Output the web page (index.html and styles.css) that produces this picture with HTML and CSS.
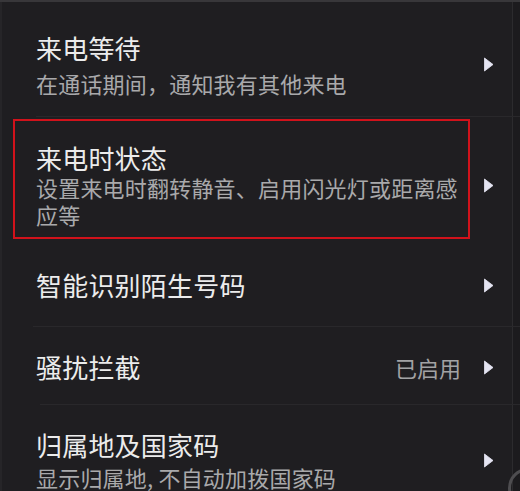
FILE: index.html
```html
<!DOCTYPE html>
<html lang="zh-CN">
<head>
<meta charset="utf-8">
<title>来电设置</title>
<link rel="stylesheet" href="styles.css">
</head>
<body>
<div class="screen">
  <div class="row row-1">
    <div class="text">
      <div class="title">来电等待</div>
      <div class="sub">在通话期间，通知我有其他来电</div>
    </div>
    <svg class="arrow" viewBox="0 0 11 15"><polygon points="1.5,1 10,7.5 1.5,14" stroke-linejoin="round" /></svg>
  </div>
  <div class="sep sep-1"></div>
  <div class="row row-2">
    <div class="text highlight">
      <div class="title">来电时状态</div>
      <div class="sub">设置来电时翻转静音、启用闪光灯或距离感应等</div>
    </div>
    <svg class="arrow" viewBox="0 0 11 15"><polygon points="1.5,1 10,7.5 1.5,14" stroke-linejoin="round" /></svg>
  </div>
  <div class="row row-3">
    <div class="text">
      <div class="title">智能识别陌生号码</div>
    </div>
    <svg class="arrow" viewBox="0 0 11 15"><polygon points="1.5,1 10,7.5 1.5,14" stroke-linejoin="round" /></svg>
  </div>
  <div class="sep sep-3"></div>
  <div class="row row-4">
    <div class="text">
      <div class="title">骚扰拦截</div>
    </div>
    <span class="value">已启用</span>
    <svg class="arrow" viewBox="0 0 11 15"><polygon points="1.5,1 10,7.5 1.5,14" stroke-linejoin="round" /></svg>
  </div>
  <div class="sep sep-4"></div>
  <div class="row row-5">
    <div class="text">
      <div class="title">归属地及国家码</div>
      <div class="sub">显示归属地, 不自动加拨国家码</div>
    </div>
    <svg class="arrow" viewBox="0 0 11 15"><polygon points="1.5,1 10,7.5 1.5,14" stroke-linejoin="round" /></svg>
  </div>
  <div class="fab-ring"></div>
</div>
</body>
</html>
```

FILE: styles.css
```css
html, body {
  margin: 0;
  padding: 0;
  background: #1f1e21;
}

.screen {
  position: relative;
  width: 520px;
  height: 491px;
  overflow: hidden;
  background: #1f1e21;
  border-top: 2px solid #38373a;
  box-sizing: border-box;
  font-family: "Noto Sans CJK SC", "Noto Sans", sans-serif;
  box-shadow: inset 2px 0 0 #262528, inset -7px 0 0 #1c1b1e, inset -8px 0 0 #2c2b2e;
}

.row {
  display: flex;
  align-items: center;
  padding-left: 36px;
  padding-right: 26px;
}

.text {
  flex: 1;
  min-width: 0;
  max-width: 430px;
}

.title {
  font-size: 26px;
  line-height: 32px;
  color: #ececec;
  letter-spacing: 0.2px;
}

.sub {
  font-size: 22px;
  line-height: 27px;
  color: #a9a9ab;
  letter-spacing: 0.2px;
}

.value {
  font-size: 22px;
  line-height: 32px;
  color: #a2a2a4;
  margin-right: 22px;
}

.arrow {
  width: 11px;
  height: 15px;
  fill: #e4e4f2;
  stroke: #e4e4f2;
  stroke-width: 0.8;
  flex: none;
  margin-left: auto;
}

.value + .arrow {
  margin-left: 0;
}

.row-1 {
  padding-top: 30px;
  padding-bottom: 19px;
}

.row-1 .sub {
  margin-top: 6px;
}

.row-2 {
  padding-top: 25px;
  padding-bottom: 11px;
}

.row-3 {
  padding-top: 30px;
  padding-bottom: 25px;
}

.row-4 {
  padding-top: 24px;
  padding-bottom: 21px;
}

.row-5 {
  padding-top: 24px;
}

.row-5 .sub {
  margin-top: 3px;
}

.sep {
  height: 1px;
  background: #29282b;
}

.sep-1 {
  margin-left: 36px;
}

.sep-3 {
  margin-left: 33px;
}

.sep-4 {
  margin-left: 40px;
}

.highlight {
  position: relative;
}

.highlight::after {
  content: "";
  position: absolute;
  left: -23px;
  right: -4px;
  top: -23px;
  bottom: -11px;
  border: 2px solid #d1121b;
  pointer-events: none;
}

.fab-ring {
  position: absolute;
  left: 508px;
  top: 466px;
  width: 40px;
  height: 40px;
  border: 3px solid #4e4d50;
  border-radius: 50%;
  box-sizing: border-box;
}
```
